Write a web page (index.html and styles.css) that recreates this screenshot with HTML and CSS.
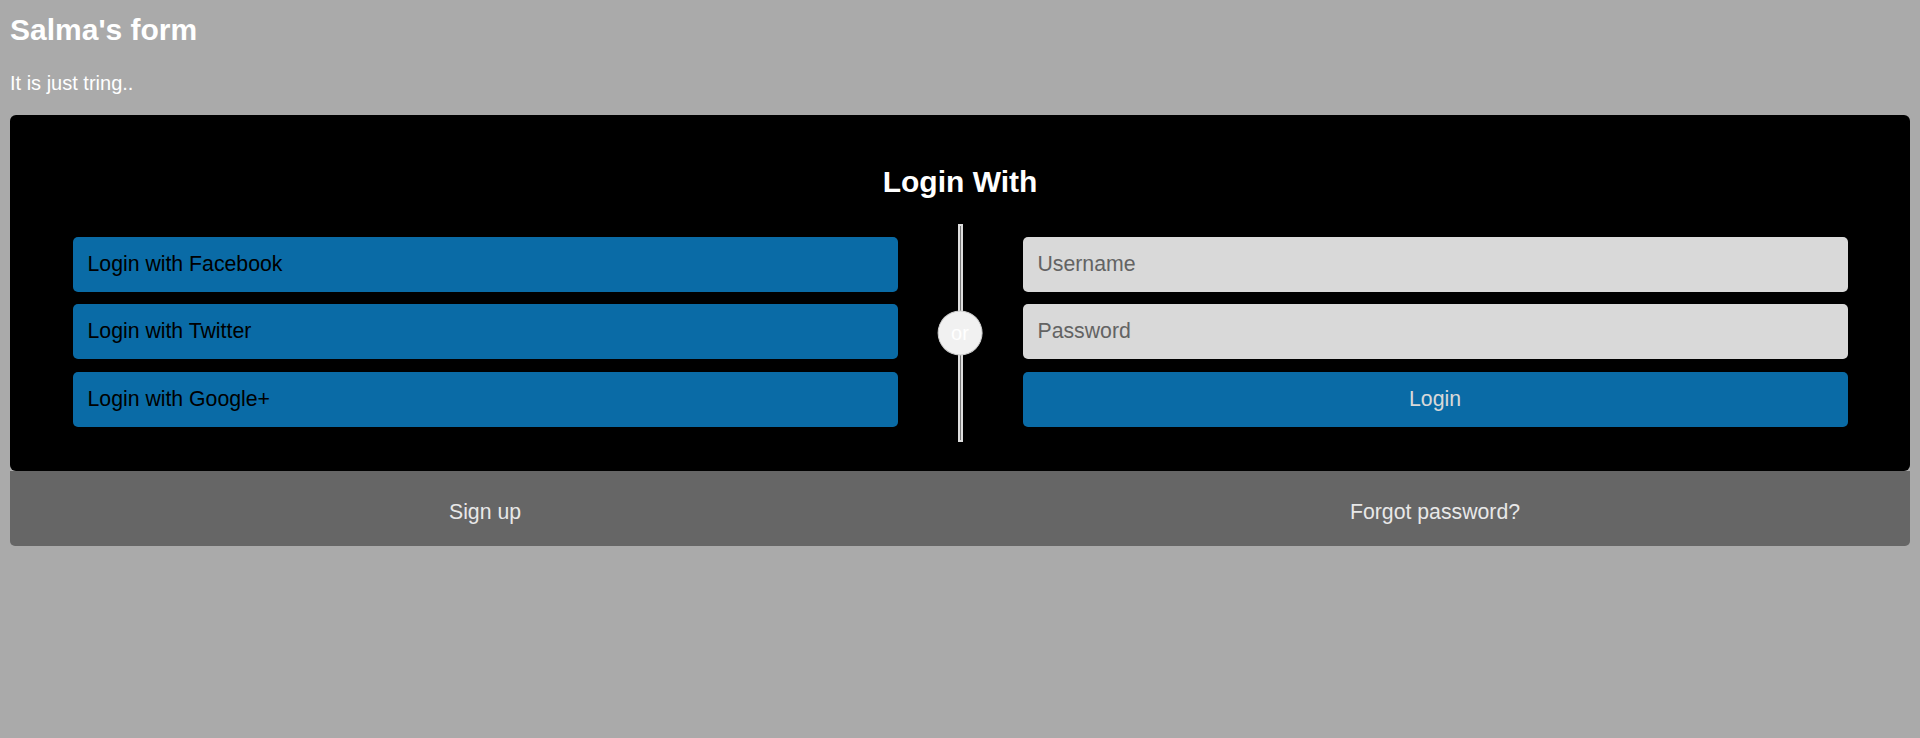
FILE: index.html
```html
<!DOCTYPE html>
<html>
<head>
  <meta charset="utf-8">
  <meta name="viewport" content="width=device-width, initial-scale=1">
  <title>Salma's form</title>
  <link rel="stylesheet" href="styles.css">
</head>
<body>
  <h2 class="page-title">Salma's form</h2>
  <p class="intro">It is just tring..</p>

  <div class="container">
    <form action="#">
      <h2 class="box-title">Login With</h2>
      <div class="row">
        <div class="vl">
          <span class="vl-innertext">or</span>
        </div>
        <div class="col">
          <a href="#" class="btn social">Login with Facebook</a>
          <a href="#" class="btn social">Login with Twitter</a>
          <a href="#" class="btn social">Login with Google+</a>
        </div>
        <div class="col">
          <input type="text" name="username" placeholder="Username">
          <input type="password" name="password" placeholder="Password">
          <input type="submit" value="Login">
        </div>
      </div>
    </form>
  </div>

  <div class="bottom-container">
    <div class="col">
      <a href="#" class="btn link">Sign up</a>
    </div>
    <div class="col">
      <a href="#" class="btn link">Forgot password?</a>
    </div>
  </div>
</body>
</html>
```

FILE: styles.css
```css
* {
  box-sizing: border-box;
}
body {
  margin: 10px;
  background: #aaaaaa;
  color: #fff;
  font-family: "Liberation Sans", Arial, Helvetica, sans-serif;
  font-size: 20px;
}
.page-title {
  font-size: 30px;
  margin: 2.5px 0 25px;
}
.intro {
  margin: 0 0 20px;
  line-height: 23px;
}
.container {
  position: relative;
  background: #000;
  border-radius: 6px;
  padding: 25px 0 44px;
}
.box-title {
  font-size: 30px;
  text-align: center;
  margin: 25px 0;
}
.row {
  position: relative;
  display: grid;
  grid-template-columns: 1fr 1fr;
}
.col {
  display: flex;
  flex-direction: column;
  gap: 12.5px;
  padding: 13.25px 62.5px 0;
}
input,
.btn {
  width: 100%;
  padding: 15px;
  border: none;
  border-radius: 5px;
  margin: 0;
  opacity: 0.85;
  display: block;
  font-family: inherit;
  font-size: 21.25px;
  line-height: 25px;
  text-decoration: none;
}
input {
  background: #fff;
  color: #000;
}
input::placeholder {
  color: #757575;
}
.social {
  background: #0c7ec3;
  color: #000;
}
input[type=submit] {
  background: #0c7ec3;
  color: #fff;
  text-align: center;
}
.vl {
  position: absolute;
  top: 0;
  left: calc(50% - 2.5px);
  width: 5px;
  height: 218.75px;
  background: #777;
  border: 2px solid #ddd;
}
.vl-innertext {
  position: absolute;
  top: 50%;
  left: 50%;
  transform: translate(-50%, -50%);
  background: #f1f1f1;
  border: 1.25px solid #ccc;
  border-radius: 50%;
  padding: 10px 12.5px;
  line-height: 23px;
  color: #fff;
}
.bottom-container {
  display: grid;
  grid-template-columns: 1fr 1fr;
  background: #666;
  border-radius: 0 0 5px 5px;
}
.bottom-container .col {
  padding: 13.75px 62.5px 6.25px;
}
.link {
  color: #fff;
  text-align: center;
}
```
